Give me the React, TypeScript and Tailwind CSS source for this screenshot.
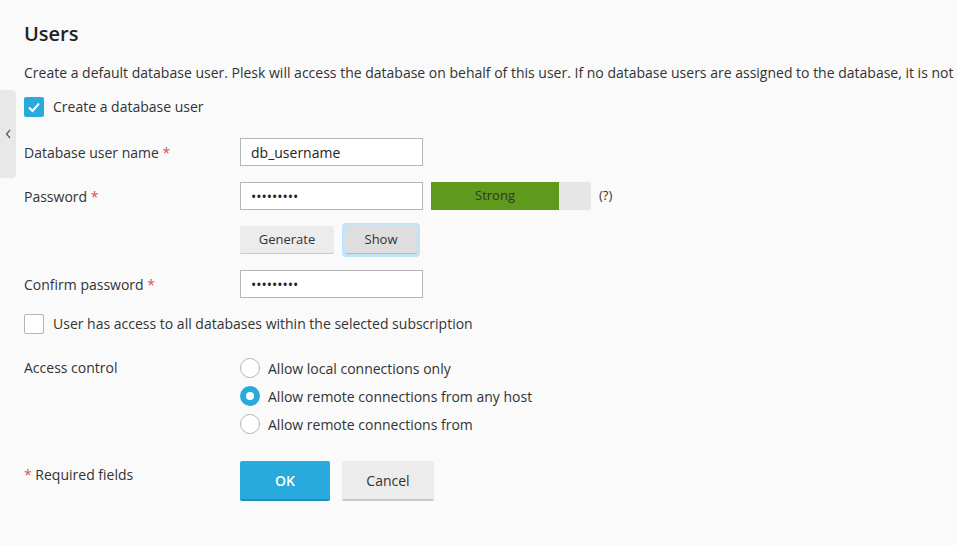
import { useState } from 'react';

/** Plesk 데이터베이스 사용자 폼 */
export default function App() {
    const [createUser, setCreateUser] = useState<boolean>(true);
    const [allDbs, setAllDbs] = useState<boolean>(false);
    const [access, setAccess] = useState<string>('any');

    const label = 'w-[216px] shrink-0 text-[14px] text-[#333]';
    const input =
        'w-[183px] h-[28px] border border-[#b5b5b5] bg-white px-[10px] text-[14px] text-[#222] outline-none';

    const radio = (value: string, text: string) => (
        <label className="flex items-center gap-[8px] h-[28px] cursor-pointer" onClick={() => setAccess(value)}>
            {access === value ? (
                <span className="w-[20px] h-[20px] rounded-full bg-[#28aadc] flex items-center justify-center">
                    <span className="w-[8px] h-[8px] rounded-full bg-white" />
                </span>
            ) : (
                <span className="w-[20px] h-[20px] rounded-full border border-[#b5b5b5] bg-white" />
            )}
            <span className="text-[14px] text-[#333]">{text}</span>
        </label>
    );

    return (
        <div
            className="relative w-[957px] h-[545px] overflow-hidden bg-[#fafafa]"
            style={{ fontFamily: '"Open Sans", "Noto Sans", sans-serif' }}
        >
            <div className="absolute left-0 top-[90px] w-[16px] h-[88px] bg-[#e8e8e8] rounded-r-[4px] flex items-center justify-center">
                <svg width="6" height="10" viewBox="0 0 6 10">
                    <path d="M5 1 L1.5 5 L5 9" fill="none" stroke="#555" strokeWidth="1.2" />
                </svg>
            </div>
            <div className="pl-[24px] pt-[20px]">
                <h2 className="text-[20px] font-semibold text-[#222] leading-[28px]">Users</h2>
                <p className="mt-[15px] text-[14px] text-[#333] whitespace-nowrap leading-[20px]">
                    Create a default database user. Plesk will access the database on behalf of this user. If no
                    database users are assigned to the database, it is not
                </p>
                <label className="mt-[13px] flex items-center gap-[9px] cursor-pointer" onClick={() => setCreateUser(!createUser)}>
                    {createUser ? (
                        <span className="w-[20px] h-[20px] rounded-[2px] bg-[#28aadc] flex items-center justify-center">
                            <svg width="14" height="14" viewBox="0 0 14 14">
                                <path d="M2 7.5 L5.5 11 L12 3.5" fill="none" stroke="white" strokeWidth="2" />
                            </svg>
                        </span>
                    ) : (
                        <span className="w-[20px] h-[20px] rounded-[2px] border border-[#b5b5b5] bg-white" />
                    )}
                    <span className="text-[14px] text-[#333]">Create a database user</span>
                </label>

                <div className="mt-[21px] flex items-center">
                    <div className={label}>
                        Database user name <span className="text-[#d9534f]">*</span>
                    </div>
                    <input className={input} defaultValue="db_username" />
                </div>

                <div className="mt-[16px] flex items-center">
                    <div className={label}>
                        Password <span className="text-[#d9534f]">*</span>
                    </div>
                    <input className={input} type="password" defaultValue="secretpwd" />
                    <div className="ml-[8px] w-[160px] h-[28px] bg-[#e6e6e6] flex">
                        <div className="w-[128px] h-full bg-[#5f9a1d] flex items-center justify-center text-[13px] text-[#333]">
                            Strong
                        </div>
                    </div>
                    <span className="ml-[8px] text-[13px] text-[#333]">(?)</span>
                </div>

                <div className="mt-[13px] ml-[216px] flex items-center gap-[8px]">
                    <button className="w-[94px] h-[28px] bg-[#ececec] border-b border-[#c8c8c8] rounded-[2px] text-[13px] text-[#333]">
                        Generate
                    </button>
                    <div className="p-[3px] rounded-[4px] bg-[#c3e3fa]">
                        <button className="w-[72px] h-[28px] bg-[#dedede] border-b border-[#b8b8b8] rounded-[2px] text-[13px] text-[#333]">
                            Show
                        </button>
                    </div>
                </div>

                <div className="mt-[13px] flex items-center">
                    <div className={label}>
                        Confirm password <span className="text-[#d9534f]">*</span>
                    </div>
                    <input className={input} type="password" defaultValue="secretpwd" />
                </div>

                <label className="mt-[15px] flex items-center gap-[9px] cursor-pointer" onClick={() => setAllDbs(!allDbs)}>
                    <span className="w-[20px] h-[20px] rounded-[2px] border border-[#b5b5b5] bg-white" />
                    <span className="text-[14px] text-[#333]">User has access to all databases within the selected subscription</span>
                </label>

                <div className="mt-[20px] flex items-start">
                    <div className={`${label} pt-[3px]`}>Access control</div>
                    <div className="flex flex-col">
                        {radio('local', 'Allow local connections only')}
                        {radio('any', 'Allow remote connections from any host')}
                        {radio('from', 'Allow remote connections from')}
                    </div>
                </div>

                <div className="mt-[23px] flex items-start">
                    <div className={`${label} pt-[3px]`}>
                        <span className="text-[#d9534f]">*</span> Required fields
                    </div>
                    <div className="flex gap-[12px]">
                        <button className="w-[90px] h-[40px] bg-[#28aadc] border-b-2 border-[#1f8fbd] rounded-[2px] text-[14px] font-semibold text-white">
                            OK
                        </button>
                        <button className="w-[92px] h-[40px] bg-[#ececec] border-b-2 border-[#c8c8c8] rounded-[2px] text-[14px] text-[#333]">
                            Cancel
                        </button>
                    </div>
                </div>
            </div>
        </div>
    );
}
